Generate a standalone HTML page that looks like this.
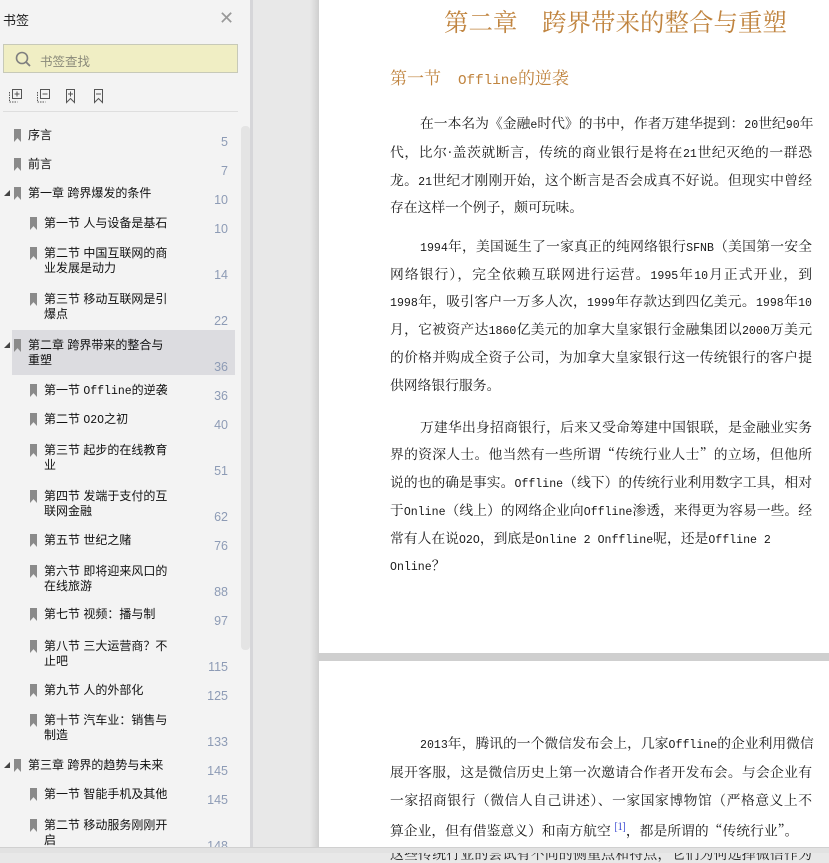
<!DOCTYPE html>
<html><head><meta charset="utf-8"><style>
*{margin:0;padding:0;box-sizing:border-box}
body{width:829px;height:853px;overflow:hidden;position:relative;background:#e8e8e8;font-family:"Liberation Sans","Noto Sans CJK SC",sans-serif}
#side{position:absolute;left:0;top:0;width:250px;height:853px;background:#f3f3f3}
#div{position:absolute;left:250px;top:0;width:3px;height:853px;background:#d6d6d9}
.a{position:absolute;white-space:nowrap}
.it{position:absolute;font-size:12px;color:#111;line-height:15px}
.bm{position:absolute;width:7px;height:13px;background:#8a8a8a;clip-path:polygon(0 0,100% 0,100% 100%,50% 70%,0 100%)}
.pg{position:absolute;right:22px;font-size:12.5px;color:#8d9bb5;text-align:right}
.tri{position:absolute;left:4px;width:0;height:0;border-left:6px solid transparent;border-bottom:6px solid #444}
.page{position:absolute;left:319px;width:510px;background:#fff}
.ln{position:absolute;left:390px;width:422px;font-family:"Noto Serif CJK SC",serif;font-size:13.8px;color:#1a1a1a;white-space:nowrap;text-align:justify;text-align-last:justify;line-height:20px}
.ln.l{text-align-last:left}
.ln.i{left:420px;width:392px}
b{font-weight:normal;font-family:"Liberation Mono",monospace;font-size:.84em}
</style></head><body>
<div id="side">
<div class="a" style="left:3px;top:10px;font-size:13px;color:#222">书签</div>
<div class="a" style="left:219px;top:8px;font-size:18px;color:#999;font-weight:300">✕</div>
<div class="a" style="left:3px;top:44px;width:235px;height:29px;background:#f0eec4;border:1px solid #c7c9b8"></div>
<svg class="a" style="left:14px;top:50px" width="18" height="18"><circle cx="8" cy="8" r="5.5" fill="none" stroke="#7f7f7f" stroke-width="1.6"/><line x1="12" y1="12" x2="16" y2="16" stroke="#7f7f7f" stroke-width="1.8"/></svg>
<div class="a" style="left:40px;top:51px;font-size:12.5px;color:#8a8a7a">书签查找</div>
<svg class="a" style="left:8px;top:88px" width="110" height="18" fill="none" stroke="#555" stroke-width="1">
<rect x="4.5" y="1.5" width="9" height="9"/><path d="M9 3.5v5M6.5 6h5"/><path d="M1.5 4v10h8" stroke-dasharray="1.5 1"/>
<rect x="32.5" y="1.5" width="9" height="9"/><path d="M34.5 6h5"/><path d="M29.5 4v10h8" stroke-dasharray="1.5 1"/>
<path d="M58.5 1.5h8v13l-4-4-4 4z"/><path d="M62.5 3.5v5M60 6h5"/>
<path d="M86.5 1.5h8v13l-4-4-4 4z"/><path d="M88 6h5"/>
</svg>
<div class="a" style="left:3px;top:111px;width:235px;height:1px;background:#dedede"></div>
<div class="a" style="left:241px;top:126px;width:9px;height:524px;background:#e4e4e4;border-radius:4px"></div>
<div class="a" style="left:12px;top:330px;width:223px;height:45px;background:#dcdce0"></div>

<div class="bm" style="left:14px;top:129px"></div><div class="it" style="left:28px;top:128px">序言</div><div class="pg" style="top:135px">5</div>
<div class="bm" style="left:14px;top:158px"></div><div class="it" style="left:28px;top:157px">前言</div><div class="pg" style="top:164px">7</div>
<div class="tri" style="top:190px"></div><div class="bm" style="left:14px;top:187px"></div><div class="it" style="left:28px;top:186px">第一章 跨界爆发的条件</div><div class="pg" style="top:193px">10</div>
<div class="bm" style="left:30px;top:217px"></div><div class="it" style="left:44px;top:216px">第一节 人与设备是基石</div><div class="pg" style="top:222px">10</div>
<div class="bm" style="left:30px;top:247px"></div><div class="it" style="left:44px;top:246px">第二节 中国互联网的商<br>业发展是动力</div><div class="pg" style="top:268px">14</div>
<div class="bm" style="left:30px;top:293px"></div><div class="it" style="left:44px;top:292px">第三节 移动互联网是引<br>爆点</div><div class="pg" style="top:314px">22</div>
<div class="tri" style="top:342px"></div><div class="bm" style="left:14px;top:339px"></div><div class="it" style="left:28px;top:338px">第二章 跨界带来的整合与<br>重塑</div><div class="pg" style="top:360px">36</div>
<div class="bm" style="left:30px;top:384px"></div><div class="it" style="left:44px;top:383px">第一节 <span style="font-family:'Liberation Mono',monospace;font-size:11.5px">Offline</span>的逆袭</div><div class="pg" style="top:389px">36</div>
<div class="bm" style="left:30px;top:413px"></div><div class="it" style="left:44px;top:412px">第二节 <span style="font-family:'Liberation Mono',monospace;font-size:11.5px">O2O</span>之初</div><div class="pg" style="top:418px">40</div>
<div class="bm" style="left:30px;top:444px"></div><div class="it" style="left:44px;top:443px">第三节 起步的在线教育<br>业</div><div class="pg" style="top:464px">51</div>
<div class="bm" style="left:30px;top:490px"></div><div class="it" style="left:44px;top:489px">第四节 发端于支付的互<br>联网金融</div><div class="pg" style="top:510px">62</div>
<div class="bm" style="left:30px;top:534px"></div><div class="it" style="left:44px;top:533px">第五节 世纪之赌</div><div class="pg" style="top:539px">76</div>
<div class="bm" style="left:30px;top:565px"></div><div class="it" style="left:44px;top:564px">第六节 即将迎来风口的<br>在线旅游</div><div class="pg" style="top:585px">88</div>
<div class="bm" style="left:30px;top:608px"></div><div class="it" style="left:44px;top:607px">第七节 视频：播与制</div><div class="pg" style="top:614px">97</div>
<div class="bm" style="left:30px;top:640px"></div><div class="it" style="left:44px;top:639px">第八节 三大运营商？不<br>止吧</div><div class="pg" style="top:660px">115</div>
<div class="bm" style="left:30px;top:684px"></div><div class="it" style="left:44px;top:683px">第九节 人的外部化</div><div class="pg" style="top:689px">125</div>
<div class="bm" style="left:30px;top:714px"></div><div class="it" style="left:44px;top:713px">第十节 汽车业：销售与<br>制造</div><div class="pg" style="top:735px">133</div>
<div class="tri" style="top:762px"></div><div class="bm" style="left:14px;top:759px"></div><div class="it" style="left:28px;top:758px">第三章 跨界的趋势与未来</div><div class="pg" style="top:764px">145</div>
<div class="bm" style="left:30px;top:788px"></div><div class="it" style="left:44px;top:787px">第一节 智能手机及其他</div><div class="pg" style="top:793px">145</div>
<div class="bm" style="left:30px;top:819px"></div><div class="it" style="left:44px;top:818px">第二节 移动服务刚刚开<br>启</div><div class="pg" style="top:839px">148</div>
</div>
<div id="div"></div>
<div class="a" style="left:310px;top:0;width:9px;height:853px;background:linear-gradient(90deg,#e8e8e8,#cfcfcf)"></div>
<div class="page" style="top:0;height:653px"></div>
<div class="a" style="left:319px;top:653px;width:510px;height:8px;background:#cfcfcf"></div>
<div class="page" style="top:661px;height:192px"></div>

<div class="a" style="left:444px;top:4px;font-family:'Liberation Serif','Noto Serif CJK SC',serif;font-size:24.5px;color:#c0843f">第二章　跨界带来的整合与重塑</div>
<div class="a" style="left:390px;top:64px;font-family:'Noto Serif CJK SC',serif;font-size:17px;color:#c0843f">第一节　<b>Offline</b>的逆袭</div>

<div class="ln i" style="top:112px">在一本名为《金融<b>e</b>时代》的书中，作者万建华提到：<b>20</b>世纪<b>90</b>年</div>
<div class="ln" style="top:141px">代，比尔·盖茨就断言，传统的商业银行是将在<b>21</b>世纪灭绝的一群恐</div>
<div class="ln" style="top:169px">龙。<b>21</b>世纪才刚刚开始，这个断言是否会成真不好说。但现实中曾经</div>
<div class="ln l" style="top:196px">存在这样一个例子，颇可玩味。</div>
<div class="ln i" style="top:235px"><b>1994</b>年，美国诞生了一家真正的纯网络银行<b>SFNB</b>（美国第一安全</div>
<div class="ln" style="top:263px">网络银行），完全依赖互联网进行运营。<b>1995</b>年<b>10</b>月正式开业，到</div>
<div class="ln" style="top:290px"><b>1998</b>年，吸引客户一万多人次，<b>1999</b>年存款达到四亿美元。<b>1998</b>年<b>10</b></div>
<div class="ln" style="top:318px">月，它被资产达<b>1860</b>亿美元的加拿大皇家银行金融集团以<b>2000</b>万美元</div>
<div class="ln" style="top:346px">的价格并购成全资子公司，为加拿大皇家银行这一传统银行的客户提</div>
<div class="ln l" style="top:374px">供网络银行服务。</div>
<div class="ln i" style="top:416px">万建华出身招商银行，后来又受命筹建中国银联，是金融业实务</div>
<div class="ln" style="top:443px">界的资深人士。他当然有一些所谓“传统行业人士”的立场，但他所</div>
<div class="ln" style="top:471px">说的也的确是事实。<b>Offline</b>（线下）的传统行业利用数字工具，相对</div>
<div class="ln" style="top:499px">于<b>Online</b>（线上）的网络企业向<b>Offline</b>渗透，来得更为容易一些。经</div>
<div class="ln l" style="top:527px">常有人在说<b>O2O</b>，到底是<b>Online 2 Onffline</b>呢，还是<b>Offline 2</b></div>
<div class="ln l" style="top:554px"><b>Online</b>？</div>

<div class="ln i" style="top:732px"><b>2013</b>年，腾讯的一个微信发布会上，几家<b>Offline</b>的企业利用微信</div>
<div class="ln" style="top:761px">展开客服，这是微信历史上第一次邀请合作者开发布会。与会企业有</div>
<div class="ln" style="top:789px">一家招商银行（微信人自己讲述）、一家国家博物馆（严格意义上不</div>
<div class="ln l" style="top:816px">算企业，但有借鉴意义）和南方航空 <sup style="color:#2233cc;font-size:10px">[1]</sup>，都是所谓的“传统行业”。</div>
<div class="ln" style="top:843px">这些传统行业的尝试有不同的侧重点和特点，它们为何选择微信作为</div>
<div class="a" style="left:0;top:847px;width:829px;height:6px;background:#e2e2e2;border-top:1px solid #d0d0d0"></div>
</body></html>
